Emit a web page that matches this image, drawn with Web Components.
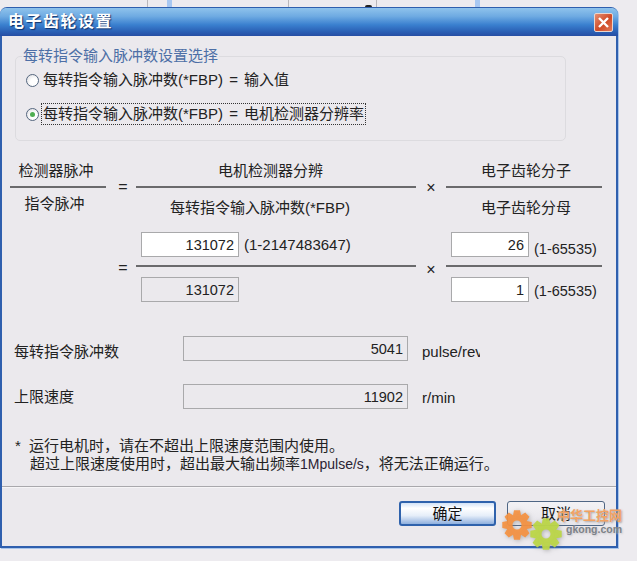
<!DOCTYPE html>
<html lang="zh">
<head>
<meta charset="utf-8">
<title>电子齿轮设置</title>
<style>
    html, body { margin: 0; height: 561px; overflow: hidden; background: #edebef; }
</style>
</head>
<body>
<gear-settings></gear-settings>
<script>
const FONT = `"Liberation Sans", "Noto Sans CJK SC", sans-serif`;

// Background sliver of the window behind the dialog
class BgStrip extends HTMLElement {
    constructor() {
        super();
        this.attachShadow({ mode: 'open' });
        this.shadowRoot.innerHTML = `
            <style>
                :host { display: flex; height: 7px; overflow: hidden; }
                i { display: block; height: 7px; }
                .line { width: 1px; background: #b9b7bb; }
                .band { width: 5px; background: #a8c8f2; }
                .digit { width: 7px; height: 2px; margin-top: 5px; background: #222; border-radius: 3px 3px 0 0; }
            </style>
            <i style="width:147px"></i><i class="line"></i>
            <i style="width:19px"></i><i class="band"></i>
            <i style="width:116px"></i><i class="line"></i>
            <i style="width:76px"></i><i class="digit"></i>
            <i style="width:4px"></i><i class="line"></i>
            <i style="width:98px"></i><i class="band"></i>
        `;
    }
}
customElements.define('bg-strip', BgStrip);

// XP style window with title bar and close box
class XpDialog extends HTMLElement {
    constructor() {
        super();
        this.attachShadow({ mode: 'open' });
        this.shadowRoot.innerHTML = `
            <style>
                :host {
                    display: flex;
                    flex-direction: column;
                    box-sizing: border-box;
                    width: 618px;
                    height: 541px;
                    border: 2px solid #2f5fae;
                    border-top-width: 1px;
                    border-radius: 7px 7px 0 0;
                    background: #ebe9ed;
                    box-shadow: 1px 1px 0 #a9c5ea;
                    font: 15px/20px ${FONT};
                    color: #222;
                }
                .bar {
                    display: flex;
                    align-items: center;
                    justify-content: space-between;
                    flex: none;
                    height: 28px;
                    margin: 0 -2px;
                    padding: 0 5px 0 8px;
                    border-radius: 6px 6px 0 0;
                    background: linear-gradient(#8fc3ec 0, #6eaae2 30%, #3a80cf 60%, #2a5fb4 85%, #274ea4 100%);
                }
                .title {
                    font-size: 16px;
                    font-weight: 700;
                    letter-spacing: 1.5px;
                    color: #fff;
                    text-shadow: 1px 1px 1px #12336e;
                }
                .close {
                    display: flex;
                    align-items: center;
                    justify-content: center;
                    width: 19px;
                    height: 19px;
                    border: 1px solid #e9d6cf;
                    border-radius: 2px;
                    box-sizing: border-box;
                    background: linear-gradient(135deg, #e58f72, #cf4a26 55%, #e0795a);
                }
            </style>
            <div class="bar">
                <span class="title"></span>
                <span class="close">
                    <svg width="13" height="13" viewBox="0 0 13 13"><path d="M2 2l9 9M11 2l-9 9" stroke="#fff" stroke-width="2.4" fill="none"/></svg>
                </span>
            </div>
            <slot></slot>
        `;
    }

    connectedCallback() {
        this.shadowRoot.querySelector('.title').textContent = this.getAttribute('heading');
    }
}
customElements.define('xp-dialog', XpDialog);

// Group box with legend
class XpGroup extends HTMLElement {
    constructor() {
        super();
        this.attachShadow({ mode: 'open' });
        this.shadowRoot.innerHTML = `
            <style>
                :host { display: block; }
                fieldset {
                    box-sizing: border-box;
                    margin: 0;
                    padding: 5px 10px 16px 0;
                    border: 1px solid #dcdbdf;
                    border-radius: 5px;
                }
                legend {
                    padding: 0 1px;
                    margin-left: 6px;
                    font-size: 15px;
                    line-height: 18px;
                    color: #4d6fa6;
                }
                .rows { display: flex; flex-direction: column; gap: 14px; padding-left: 10px; }
            </style>
            <fieldset>
                <legend></legend>
                <div class="rows"><slot></slot></div>
            </fieldset>
        `;
    }

    connectedCallback() {
        this.shadowRoot.querySelector('legend').textContent = this.getAttribute('legend');
    }
}
customElements.define('xp-group', XpGroup);

// Radio button, drawn XP style
class XpRadio extends HTMLElement {
    constructor() {
        super();
        this.attachShadow({ mode: 'open' });
        this.shadowRoot.innerHTML = `
            <style>
                :host { display: flex; align-items: center; height: 20px; word-spacing: 2px; }
                .dot {
                    box-sizing: border-box;
                    flex: none;
                    width: 13px;
                    height: 13px;
                    margin-right: 2px;
                    border: 1px solid #55677f;
                    border-radius: 50%;
                    background: radial-gradient(circle at 65% 65%, #fff 35%, #d9d8dc 100%);
                    display: flex;
                    align-items: center;
                    justify-content: center;
                }
                :host([checked]) .dot::after {
                    content: '';
                    width: 5px;
                    height: 5px;
                    border-radius: 50%;
                    background: #4fae52;
                }
                .label { padding: 0 1px 0 1px; border: 1px dotted transparent; white-space: nowrap; }
                :host([focused]) .label { border-color: #333; }
            </style>
            <span class="dot"></span>
            <span class="label"><slot></slot></span>
        `;
    }
}
customElements.define('xp-radio', XpRadio);

// Fraction: numerator, rule, denominator
class GearFrac extends HTMLElement {
    constructor() {
        super();
        this.attachShadow({ mode: 'open' });
        this.shadowRoot.innerHTML = `
            <style>
                :host { display: flex; flex-direction: column; }
                .numer { height: var(--numer-h, 26px); }
                .rule { height: 2px; background: #6a6a6c; flex: none; }
                .denom { padding-top: var(--denom-pad, 10px); }
            </style>
            <div class="numer"><slot name="numer"></slot></div>
            <div class="rule"></div>
            <div class="denom"><slot name="denom"></slot></div>
        `;
    }
}
customElements.define('gear-frac', GearFrac);

// Number box, white when editable and grey when read only
class NumBox extends HTMLElement {
    constructor() {
        super();
        this.attachShadow({ mode: 'open' });
        this.shadowRoot.innerHTML = `
            <style>
                :host {
                    display: block;
                    box-sizing: border-box;
                    width: var(--box-w, 98px);
                    height: 25px;
                    flex: none;
                    padding-right: 4px;
                    border: 1px solid #a9a9ab;
                    background: #fff;
                    font: 14.5px/24px ${FONT};
                    text-align: right;
                    color: #222;
                }
                :host([readonly]) { background: #ebe9ed; }
            </style>
            <slot></slot>
        `;
    }
}
customElements.define('num-box', NumBox);

class XpButton extends HTMLElement {
    constructor() {
        super();
        this.attachShadow({ mode: 'open' });
        this.shadowRoot.innerHTML = `
            <style>
                :host {
                    display: flex;
                    align-items: center;
                    justify-content: center;
                    box-sizing: border-box;
                    width: 98px;
                    height: 25px;
                    border: 1px solid #4f6684;
                    border-radius: 3px;
                    font: 15px/20px ${FONT};
                    color: #111;
                    background: linear-gradient(#f3f2f5, #e6e5ea);
                }
                :host([default]) {
                    width: 97px;
                    border: 2px solid #2f62ac;
                    background: linear-gradient(#d3e3f7, #ffffff 25%, #e6eef9 60%, #8fb0de);
                }
            </style>
            <slot></slot>
        `;
    }
}
customElements.define('xp-button', XpButton);

// Site watermark stamped over the corner of the picture
class GkongMark extends HTMLElement {
    constructor() {
        super();
        this.attachShadow({ mode: 'open' });
        this.shadowRoot.innerHTML = `
            <style>
                :host { position: absolute; left: 500px; top: 508px; width: 130px; height: 46px; display: block; }
                svg { position: absolute; left: 0; top: 0; filter: drop-shadow(1px 1px 2px rgba(120, 120, 120, .5)); }
                .cn, .en { position: absolute; white-space: nowrap; }
                .cn {
                    left: 57px; top: -2px;
                    font: 700 13px/18px "Noto Sans CJK SC", sans-serif;
                    color: #f2a263;
                    text-shadow: 1px 1px 2px #a8a4a4;
                }
                .en {
                    left: 66px; top: 13px;
                    font: 700 10.5px/16px "Liberation Sans", sans-serif;
                    color: #7d8288;
                    text-shadow: 1px 1px 2px #c8c6ca;
                }
            </style>
            <svg width="70" height="46" viewBox="0 0 70 46">
                <path fill="#f59140" opacity=".92" fill-rule="evenodd" d="${gearPath(17, 17, 15, 10.5, 8, 4.5)}"/>
                <path fill="#bcd648" opacity=".95" fill-rule="evenodd" d="${gearPath(46, 26, 16, 11, 8, 4.5)}"/>
            </svg>
            <span class="cn">中华工控网</span>
            <span class="en">gkong.com</span>
        `;
    }
}

function gearPath(cx, cy, outer, inner, teeth, hole) {
    const pts = [];
    const step = Math.PI * 2 / teeth;
    for (let t = 0; t < teeth; t++) {
        const a = t * step;
        [[inner, -0.5], [outer, -0.26], [outer, 0.26], [inner, 0.5]].forEach(([r, k]) => {
            const b = a + k * step;
            pts.push((cx + r * Math.cos(b)).toFixed(1) + ' ' + (cy + r * Math.sin(b)).toFixed(1));
        });
    }
    return 'M' + pts.join('L') + 'Z' +
        `M${cx - hole} ${cy}a${hole} ${hole} 0 1 0 ${hole * 2} 0a${hole} ${hole} 0 1 0 ${-hole * 2} 0Z`;
}
customElements.define('gkong-mark', GkongMark);

// The electronic gear dialog itself
class GearSettings extends HTMLElement {
    constructor() {
        super();
        this.attachShadow({ mode: 'open' });
        this.shadowRoot.innerHTML = `
            <style>
                :host { display: block; position: relative; width: 637px; height: 561px; }
                xp-group { margin: 11px 50px 0 13px; }
                .eq {
                    display: grid;
                    grid-template-columns: 96px 30px 280px 30px 156px;
                    margin-left: 8px;
                    text-align: center;
                }
                .eq-a { margin-top: 19px; --numer-h: 26px; }
                .eq-a [slot=numer] { padding-top: 1px; }
                .eq-b { margin-top: 14px; --numer-h: 33px; text-align: left; }
                .op { font-size: 16px; line-height: 20px; text-align: center; }
                .op.eq-sign { padding-left: 4px; }
                .eq-a .op.eq-sign { padding-top: 17px; }
                .eq-a .op.times { padding-top: 18px; }
                .eq-b .op.eq-sign { padding-top: 26px; }
                .eq-b .op.times { padding-top: 28px; }
                .first { --denom-pad: 6px; }
                .first [slot=numer] { padding-right: 4px; }
                .first [slot=denom] { padding-right: 7px; }
                .mid [slot=numer] { padding-right: 11px; }
                .mid [slot=denom] { padding-right: 32px; }
                .last [slot] { padding-left: 4px; }
                .entry { display: flex; align-items: flex-start; gap: 5px; padding-left: 5px; line-height: 24px; white-space: nowrap; }
                .range-long { font-size: 15px; padding-top: 1px; }
                .range { font-size: 14.5px; padding-top: 2px; }
                .range.low { padding-top: 5px; }
                .narrow { --box-w: 78px; }
                .read { display: flex; align-items: center; height: 25px; }
                .read.one { margin-top: 33px; }
                .read.two { margin-top: 23px; }
                .read .name { width: 169px; margin-left: 12px; }
                .read.one .name { padding-top: 6px; }
                .read.two .name { padding-top: 1px; }
                .read num-box { --box-w: 225px; }
                .read .unit { width: 58px; margin-left: 14px; overflow: hidden; white-space: nowrap; }
                .read.one .unit { padding-top: 6px; }
                .read.two .unit { padding-top: 2px; }
                .note { margin: 28px 0 0 13px; line-height: 18px; white-space: nowrap; }
                .note .star { word-spacing: 4px; }
                .note .cont { padding-left: 15px; }
                .note b { font-weight: 400; font-size: 14px; color: #2a2233; }
                .sep { height: 1px; margin-top: 13px; background: #a9a8ac; border-bottom: 1px solid #f6f5f7; }
                .actions { display: flex; gap: 11px; margin: 13px 0 0 397px; }
            </style>
            <bg-strip></bg-strip>
            <xp-dialog heading="电子齿轮设置">
                <xp-group legend="每转指令输入脉冲数设置选择">
                    <xp-radio>每转指令输入脉冲数(*FBP) = 输入值</xp-radio>
                    <xp-radio checked focused>每转指令输入脉冲数(*FBP) = 电机检测器分辨率</xp-radio>
                </xp-group>

                <div class="eq eq-a">
                    <gear-frac class="first">
                        <div slot="numer">检测器脉冲</div>
                        <div slot="denom">指令脉冲</div>
                    </gear-frac>
                    <div class="op eq-sign">=</div>
                    <gear-frac class="mid">
                        <div slot="numer">电机检测器分辨</div>
                        <div slot="denom">每转指令输入脉冲数(*FBP)</div>
                    </gear-frac>
                    <div class="op times">×</div>
                    <gear-frac class="last">
                        <div slot="numer">电子齿轮分子</div>
                        <div slot="denom">电子齿轮分母</div>
                    </gear-frac>
                </div>

                <div class="eq eq-b">
                    <div></div>
                    <div class="op eq-sign">=</div>
                    <gear-frac>
                        <div slot="numer" class="entry"><num-box>131072</num-box><span class="range-long">(1-2147483647)</span></div>
                        <div slot="denom" class="entry"><num-box readonly>131072</num-box></div>
                    </gear-frac>
                    <div class="op times">×</div>
                    <gear-frac>
                        <div slot="numer" class="entry narrow"><num-box>26</num-box><span class="range low">(1-65535)</span></div>
                        <div slot="denom" class="entry narrow"><num-box>1</num-box><span class="range">(1-65535)</span></div>
                    </gear-frac>
                </div>

                <div class="read one">
                    <span class="name">每转指令脉冲数</span>
                    <num-box readonly>5041</num-box>
                    <span class="unit">pulse/rev</span>
                </div>
                <div class="read two">
                    <span class="name">上限速度</span>
                    <num-box readonly>11902</num-box>
                    <span class="unit">r/min</span>
                </div>

                <div class="note">
                    <div class="star">* 运行电机时，请在不超出上限速度范围内使用。</div>
                    <div class="cont">超过上限速度使用时，超出最大输出频率<b>1Mpulse/s</b>，将无法正确运行。</div>
                </div>
                <div class="sep"></div>
                <div class="actions">
                    <xp-button default>确定</xp-button>
                    <xp-button>取消</xp-button>
                </div>
            </xp-dialog>
            <gkong-mark></gkong-mark>
        `;
    }
}
customElements.define('gear-settings', GearSettings);
</script>
</body>
</html>
